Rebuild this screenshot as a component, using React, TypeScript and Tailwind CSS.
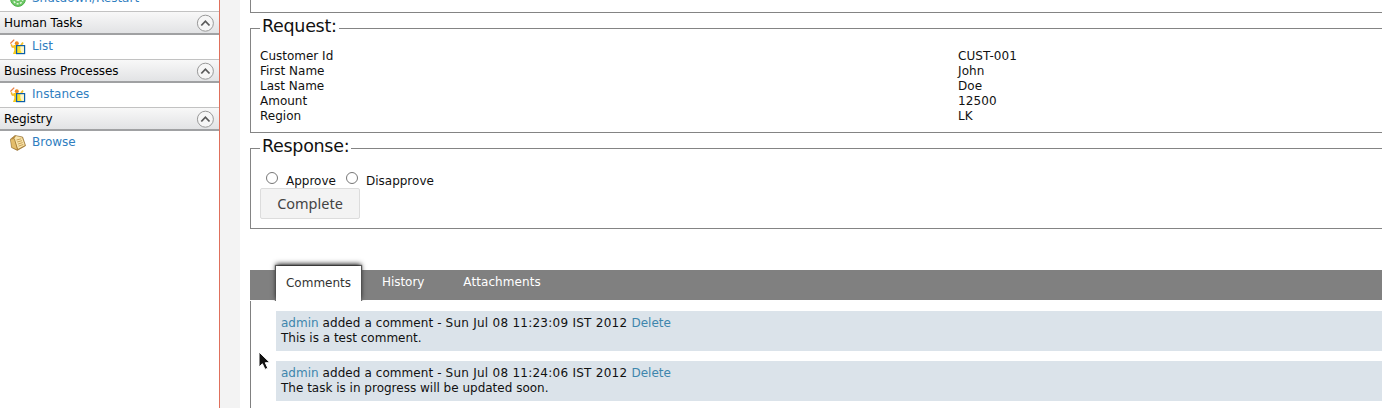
import React from "react";

function TaskIcon() {
  return (
    <svg width="16" height="16" viewBox="0 0 16 16" className="shrink-0">
      <path d="M3.5 7 L10.5 7 L13 3.4" stroke="#f5c22b" strokeWidth="1.8" fill="none" />
      <path d="M1.2 5.4 L2.4 8 L5 8" stroke="#f5b52b" strokeWidth="1.6" fill="none" />
      <path d="M0.4 4.6 L4.2 0.6" stroke="#ea7f45" strokeWidth="1.3" fill="none" />
      <path d="M3.6 6.6 H9.5 V12 L6.8 15 H3 L4.4 11 Z" fill="#f6c91c" />
      <circle cx="6.8" cy="4.2" r="2" fill="#ee8a1e" />
      <rect x="7" y="7" width="8" height="8" fill="#fdf6c9" />
      <path d="M7 7 H10.4 V11 L12.2 15 H7 Z" fill="#f9e12c" />
      <rect x="6.6" y="6.6" width="8" height="8" fill="none" stroke="#0a5fa8" strokeWidth="1.2" />
    </svg>
  );
}

function BookIcon() {
  return (
    <svg width="16" height="16" viewBox="0 0 16 16" className="shrink-0">
      <path d="M0.4 4.2 L5 0.5 L12.6 2 L15.6 10.7 L7.3 15.4 L1.6 12.6 Z" fill="#b98a3a" stroke="#8d6a2c" strokeWidth=".6" />
      <path d="M0.8 4.6 L4.6 4 L7.2 14.4 L2 12.2 Z" fill="#e3bd6b" />
      <path d="M4.2 3.6 L6 1.1 L12.1 2.5 L14.8 10.2 L7.8 14 Z" fill="#f8e5ae" />
      <path d="M6.5 5 L11.2 3.8 M7.2 7 L12 5.7 M7.9 9.1 L12.7 7.6 M8.5 11.1 L13.3 9.5" stroke="#c49a4c" strokeWidth=".9" />
      <path d="M4.4 3.8 L7.6 14.4" stroke="#97712f" strokeWidth=".7" />
    </svg>
  );
}

function PowerIcon() {
  return (
    <svg width="16" height="16" viewBox="0 0 16 16" className="shrink-0">
      <circle cx="8" cy="8" r="7.4" fill="#6cc765" stroke="#4bb046" />
      <circle cx="8" cy="8" r="4.8" fill="none" stroke="#e4f6df" strokeWidth="1.5" strokeDasharray="2 1.4" />
      <circle cx="8" cy="8" r="2" fill="#e4f6df" />
    </svg>
  );
}

function CollapseIcon() {
  return (
    <svg width="18" height="18" viewBox="0 0 18 18" className="shrink-0">
      <circle cx="9.4" cy="9.2" r="8" fill="#f6f6f6" stroke="#999" />
      <path d="M5.3 11.5 L9.4 7.2 L13.5 11.5" fill="none" stroke="#5a5a5a" strokeWidth="1.8" />
    </svg>
  );
}

function MenuHeader({ title }: { title: string }) {
  return (
    <div className="flex h-6 items-center justify-between border-t border-b-2 border-t-[#c2c2c2] border-b-[#a0a1a3] bg-linear-to-b from-[#f8f8f8] to-[#e2e3e5] pr-[5px] pl-1 tracking-[-0.08px] text-black">
      <span className="pt-[2px]">{title}</span>
      <CollapseIcon />
    </div>
  );
}

function MenuItem({ icon, label }: { icon: React.ReactNode; label: string }) {
  return (
    <div className="flex h-6 items-center gap-[6px] pl-[10px] text-[#2f7ebf]">
      {icon}
      <a className="pb-px">{label}</a>
    </div>
  );
}

function Section({ title, children, className }: { title: string; children: React.ReactNode; className: string }) {
  return (
    <fieldset className={"w-[1150px] border border-[#848484] px-[9px] " + className}>
      <legend className="px-[2px] pb-1 text-[17.5px] leading-[18px] tracking-[-0.3px]">{title}</legend>
      {children}
    </fieldset>
  );
}

const fields = [
  ["Customer Id", "CUST-001"],
  ["First Name", "John"],
  ["Last Name", "Doe"],
  ["Amount", "12500"],
  ["Region", "LK"],
];

const comments = [
  { date: "Sun Jul 08 11:23:09 IST 2012", text: "This is a test comment." },
  { date: "Sun Jul 08 11:24:06 IST 2012", text: "The task is in progress will be updated soon." },
];

export default function App() {
  return (
    <div className="relative flex h-[408px] w-[1382px] overflow-hidden bg-white font-['DejaVu_Sans',sans-serif] text-[12px] leading-[15px] text-[#111]">
      <nav className="w-[220px] shrink-0 border-r border-[#e0705c]">
        <div className="-mt-[13px]">
          <MenuItem icon={<PowerIcon />} label="Shutdown/Restart" />
        </div>
        <MenuHeader title="Human Tasks" />
        <MenuItem icon={<TaskIcon />} label="List" />
        <MenuHeader title="Business Processes" />
        <MenuItem icon={<TaskIcon />} label="Instances" />
        <MenuHeader title="Registry" />
        <MenuItem icon={<BookIcon />} label="Browse" />
      </nav>
      <div className="w-5 shrink-0 bg-[#f3f3f3]" />
      <main className="w-[1142px] shrink-0 pl-[10px]">
        <div className="h-[13px] w-[1150px] border-b border-l border-[#848484]" />
        <Section title="Request:" className="mt-1 h-[116px]">
          <dl className="mt-[10px]">
            {fields.map(([k, v]) => (
              <div key={k} className="flex">
                <dt className="w-[698px]">{k}</dt>
                <dd className="tracking-[0.1px]">{v}</dd>
              </div>
            ))}
          </dl>
        </Section>
        <Section title="Response:" className="mt-1 h-[92px]">
          <div className="mt-[13px] flex h-4">
            <label className="flex pl-[6px]">
              <input type="radio" name="response" className="m-0 size-3 shrink-0 appearance-none rounded-full border border-[#777] bg-white" />
              <span className="mt-[2px] ml-2">Approve</span>
            </label>
            <label className="flex pl-[10px]">
              <input type="radio" name="response" className="m-0 size-3 shrink-0 appearance-none rounded-full border border-[#777] bg-white" />
              <span className="mt-[2px] ml-2">Disapprove</span>
            </label>
          </div>
          <button className="block h-[31px] w-[100px] rounded-[2px] border border-[#dcdcdc] bg-[#f3f3f3] font-['Noto_Sans',sans-serif] text-[14.5px] text-[#444]">Complete</button>
        </Section>
        <div className="mt-[41px] flex h-[30px] w-[1150px] bg-[#808080] pl-[26px] text-white">
          <div className="-mt-[4px] h-[35px] w-[85px] bg-white pt-[10px] text-center text-[#333] shadow-[0_-2px_5px_0px_#222,0_0_1px_1px_#777]">Comments</div>
          <div className="ml-[21px] pt-[5px] tracking-[-0.05px]">History</div>
          <div className="ml-[39px] pt-[5px] tracking-[0.08px]">Attachments</div>
        </div>
        <div className="relative mt-px flex h-[110px] w-[1150px] flex-col gap-[10px] border-l border-[#808080] bg-white pt-[10px] pl-[25px]">
          {comments.map((c) => (
            <div key={c.date} className="h-10 shrink-0 bg-[#dbe3ea] pt-[5px] pl-[5px]">
              <div className="whitespace-pre">
                <a className="text-[#3e86ad]">admin</a>
                <span className="tracking-[0.08px]"> added a comment - </span>
                <span className="tracking-[0.26px]">{c.date} </span>
                <a className="text-[#3e86ad]">Delete</a>
              </div>
              <div>{c.text}</div>
            </div>
          ))}
        </div>
      </main>
      <svg width="14" height="20" viewBox="0 0 14 20" className="absolute top-[351px] left-[258px]">
        <path d="M1 1 V16 L4.4 12.8 L7 18.4 L9.8 17.2 L7.3 11.7 H12 Z" fill="#111" stroke="#fff" strokeWidth="1" />
      </svg>
    </div>
  );
}
